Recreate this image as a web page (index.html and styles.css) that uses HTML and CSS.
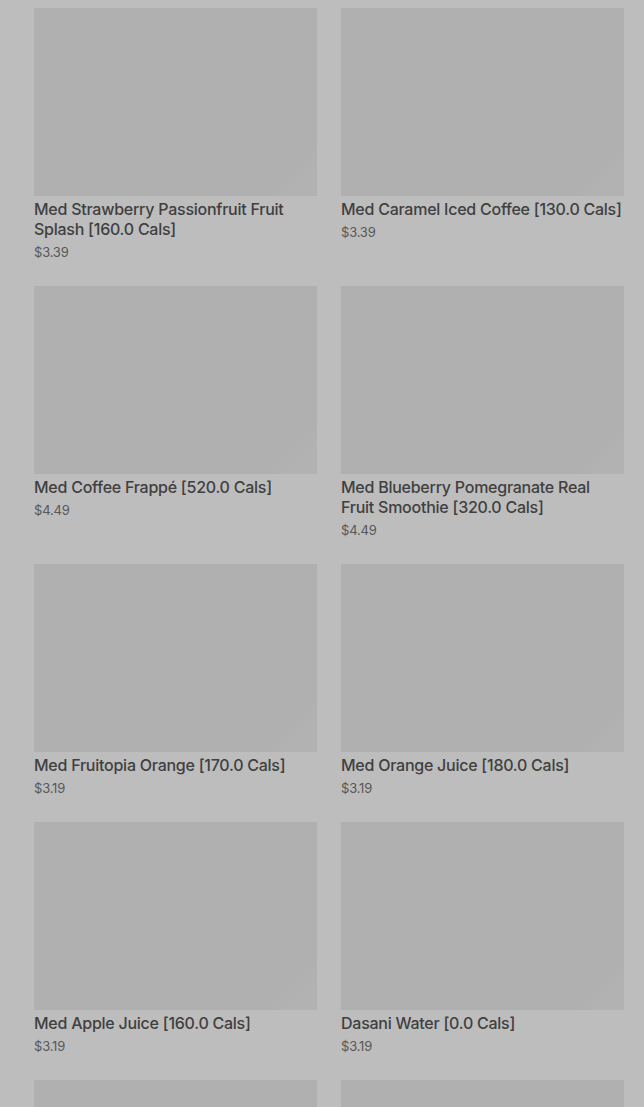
FILE: index.html
```html
<!DOCTYPE html>
<html>
<head>
<meta charset="utf-8">
<link rel="stylesheet" href="styles.css">
</head>
<body>
<div class="page">
  <div class="grid">
    <div class="item">
      <div class="thumb"></div>
      <div class="title">Med Strawberry Passionfruit Fruit Splash [160.0 Cals]</div>
      <div class="price">$3.39</div>
    </div>
    <div class="item">
      <div class="thumb"></div>
      <div class="title">Med Caramel Iced Coffee [130.0 Cals]</div>
      <div class="price">$3.39</div>
    </div>
    <div class="item">
      <div class="thumb"></div>
      <div class="title">Med Coffee Frappé [520.0 Cals]</div>
      <div class="price">$4.49</div>
    </div>
    <div class="item">
      <div class="thumb"></div>
      <div class="title">Med Blueberry Pomegranate Real Fruit Smoothie [320.0 Cals]</div>
      <div class="price">$4.49</div>
    </div>
    <div class="item">
      <div class="thumb"></div>
      <div class="title">Med Fruitopia Orange [170.0 Cals]</div>
      <div class="price">$3.19</div>
    </div>
    <div class="item">
      <div class="thumb"></div>
      <div class="title">Med Orange Juice [180.0 Cals]</div>
      <div class="price">$3.19</div>
    </div>
    <div class="item">
      <div class="thumb"></div>
      <div class="title">Med Apple Juice [160.0 Cals]</div>
      <div class="price">$3.19</div>
    </div>
    <div class="item">
      <div class="thumb"></div>
      <div class="title">Dasani Water [0.0 Cals]</div>
      <div class="price">$3.19</div>
    </div>
    <div class="item">
      <div class="thumb"></div>
    </div>
    <div class="item">
      <div class="thumb"></div>
    </div>
  </div>
</div>
</body>
</html>
```

FILE: styles.css
```css
html, body {
  margin: 0;
  padding: 0;
  background: #bdbdbd;
  overflow: hidden;
}
.page {
  padding: 8px 20px 0 34px;
  font-family: Inter, "Liberation Sans", sans-serif;
}
.grid {
  display: grid;
  grid-template-columns: 283px 283px;
  column-gap: 24px;
  row-gap: 24px;
}
.item {
  display: flex;
  flex-direction: column;
}
.thumb {
  height: 188px;
  background: linear-gradient(135deg, #b0b0b0 89%, #b2b2b2 93%, #b2b2b2);
}
.title {
  margin-top: 3px;
  font-size: 16px;
  line-height: 20px;
  font-weight: 500;
  letter-spacing: -0.25px;
  color: #404040;
}
.price {
  margin-top: 3px;
  font-size: 13px;
  line-height: 20px;
  letter-spacing: -0.2px;
  color: #585858;
}
```
